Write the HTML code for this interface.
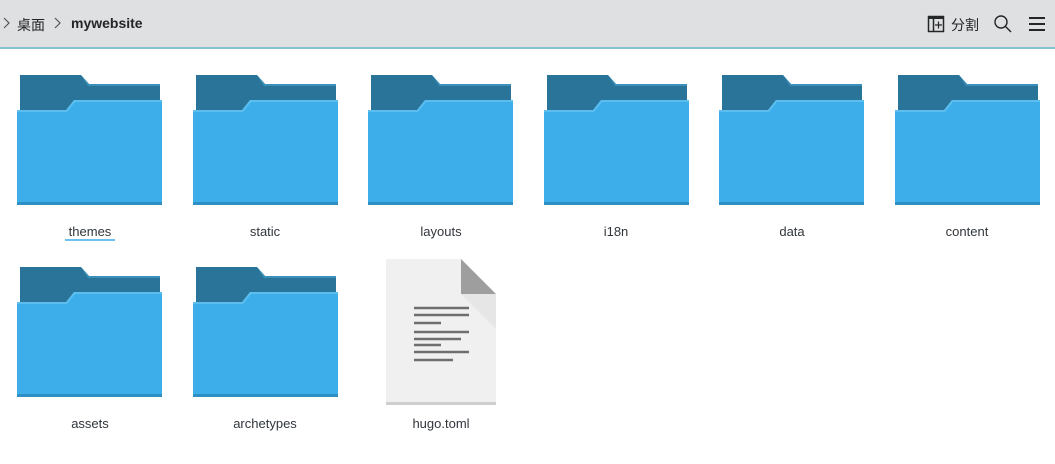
<!DOCTYPE html>
<html><head><meta charset="utf-8"><style>
body{margin:0;width:1055px;height:464px;background:#fff;font-family:"Liberation Sans","Noto Sans CJK SC",sans-serif;overflow:hidden;position:relative}
.hdr{position:absolute;left:0;top:0;width:1055px;height:47px;background:#dfe0e1}
.line{position:absolute;left:0;top:47px;width:1055px;height:2px;background:#86c0d3}
.t{position:absolute;font-size:13px;color:#232627}
.lbl{position:absolute;font-size:13px;color:#31363b;width:150px;text-align:center}
</style></head><body>
<div class="hdr"></div><div class="line"></div>
<svg style="position:absolute;left:0;top:0" width="1055" height="47">
<path d="M4 18 L9 23 L4 28" fill="none" stroke="#555" stroke-width="1.2"/>
<path d="M55 18 L60 23 L55 28" fill="none" stroke="#555" stroke-width="1.2"/>
<rect x="928.5" y="16.5" width="15" height="15" fill="none" stroke="#232627" stroke-width="1.5"/>
<rect x="928" y="16" width="16" height="3" fill="#232627"/>
<line x1="933.5" y1="18" x2="933.5" y2="32" stroke="#232627" stroke-width="1.5"/>
<path d="M935 25 H942 M938.5 21.5 V28.5" stroke="#232627" stroke-width="1.2"/>
<circle cx="1001" cy="22" r="6" fill="none" stroke="#232627" stroke-width="1.4"/>
<line x1="1005.5" y1="26.5" x2="1011" y2="32" stroke="#232627" stroke-width="1.4"/>
<path d="M1029 18 H1045 M1029 24 H1045 M1029 30 H1045" stroke="#232627" stroke-width="2"/>
</svg>
<div class="t" style="left:17px;top:15px;font-size:14px">桌面</div>
<div class="t" style="left:71px;top:15px;font-weight:bold;font-size:14px">mywebsite</div>
<div class="t" style="left:951px;top:15px;font-size:14px">分割</div>

<svg width="0" height="0" style="position:absolute"><defs>
<g id="f">
<path d="M3 0 H64 L72 9 H143 V40 H3 Z" fill="#2a7399"/>
<path d="M64 0 L72 9 H143 V11 H71 Z" fill="#3b8fb8"/>
<path d="M0 35 H49 L57 25 H145 V129 H0 Z" fill="#3daee9"/>
<path d="M0 35 H49 L57 25 H145 V27 H58 L50 37 H0 Z" fill="#5cbdef"/>
<rect x="0" y="127" width="145" height="3" fill="#2e8fc4"/>
</g></defs></svg>

<svg style="position:absolute;left:0;top:0" width="1055" height="464">
<use href="#f" x="17" y="75"/>
<use href="#f" x="193" y="75"/>
<use href="#f" x="368" y="75"/>
<use href="#f" x="544" y="75"/>
<use href="#f" x="719" y="75"/>
<use href="#f" x="895" y="75"/>
<use href="#f" x="17" y="267"/>
<use href="#f" x="193" y="267"/>
<path d="M386 259 H461 L496 294 V405 H386 Z" fill="#f0f0f0"/>
<path d="M461 294 L496 329 V294 Z" fill="#e6e6e6"/>
<path d="M461 259 L496 294 H461 Z" fill="#9e9e9e"/>
<rect x="386" y="402" width="110" height="3" fill="#cfcfcf"/>
<g stroke="#6e6e6e" stroke-width="2.5">
<path d="M414 308 H469 M414 315 H469 M414 323 H441 M414 332 H469 M414 339 H461 M414 345 H441 M414 352 H469 M414 360 H453"/>
</g>
<line x1="65" y1="240" x2="115" y2="240" stroke="#3daee9" stroke-width="1.5"/>
</svg>
<div class="lbl" style="left:15px;top:224px">themes</div>
<div class="lbl" style="left:190px;top:224px">static</div>
<div class="lbl" style="left:366px;top:224px">layouts</div>
<div class="lbl" style="left:541px;top:224px">i18n</div>
<div class="lbl" style="left:717px;top:224px">data</div>
<div class="lbl" style="left:892px;top:224px">content</div>
<div class="lbl" style="left:15px;top:416px">assets</div>
<div class="lbl" style="left:190px;top:416px">archetypes</div>
<div class="lbl" style="left:366px;top:416px">hugo.toml</div>
</body></html>
